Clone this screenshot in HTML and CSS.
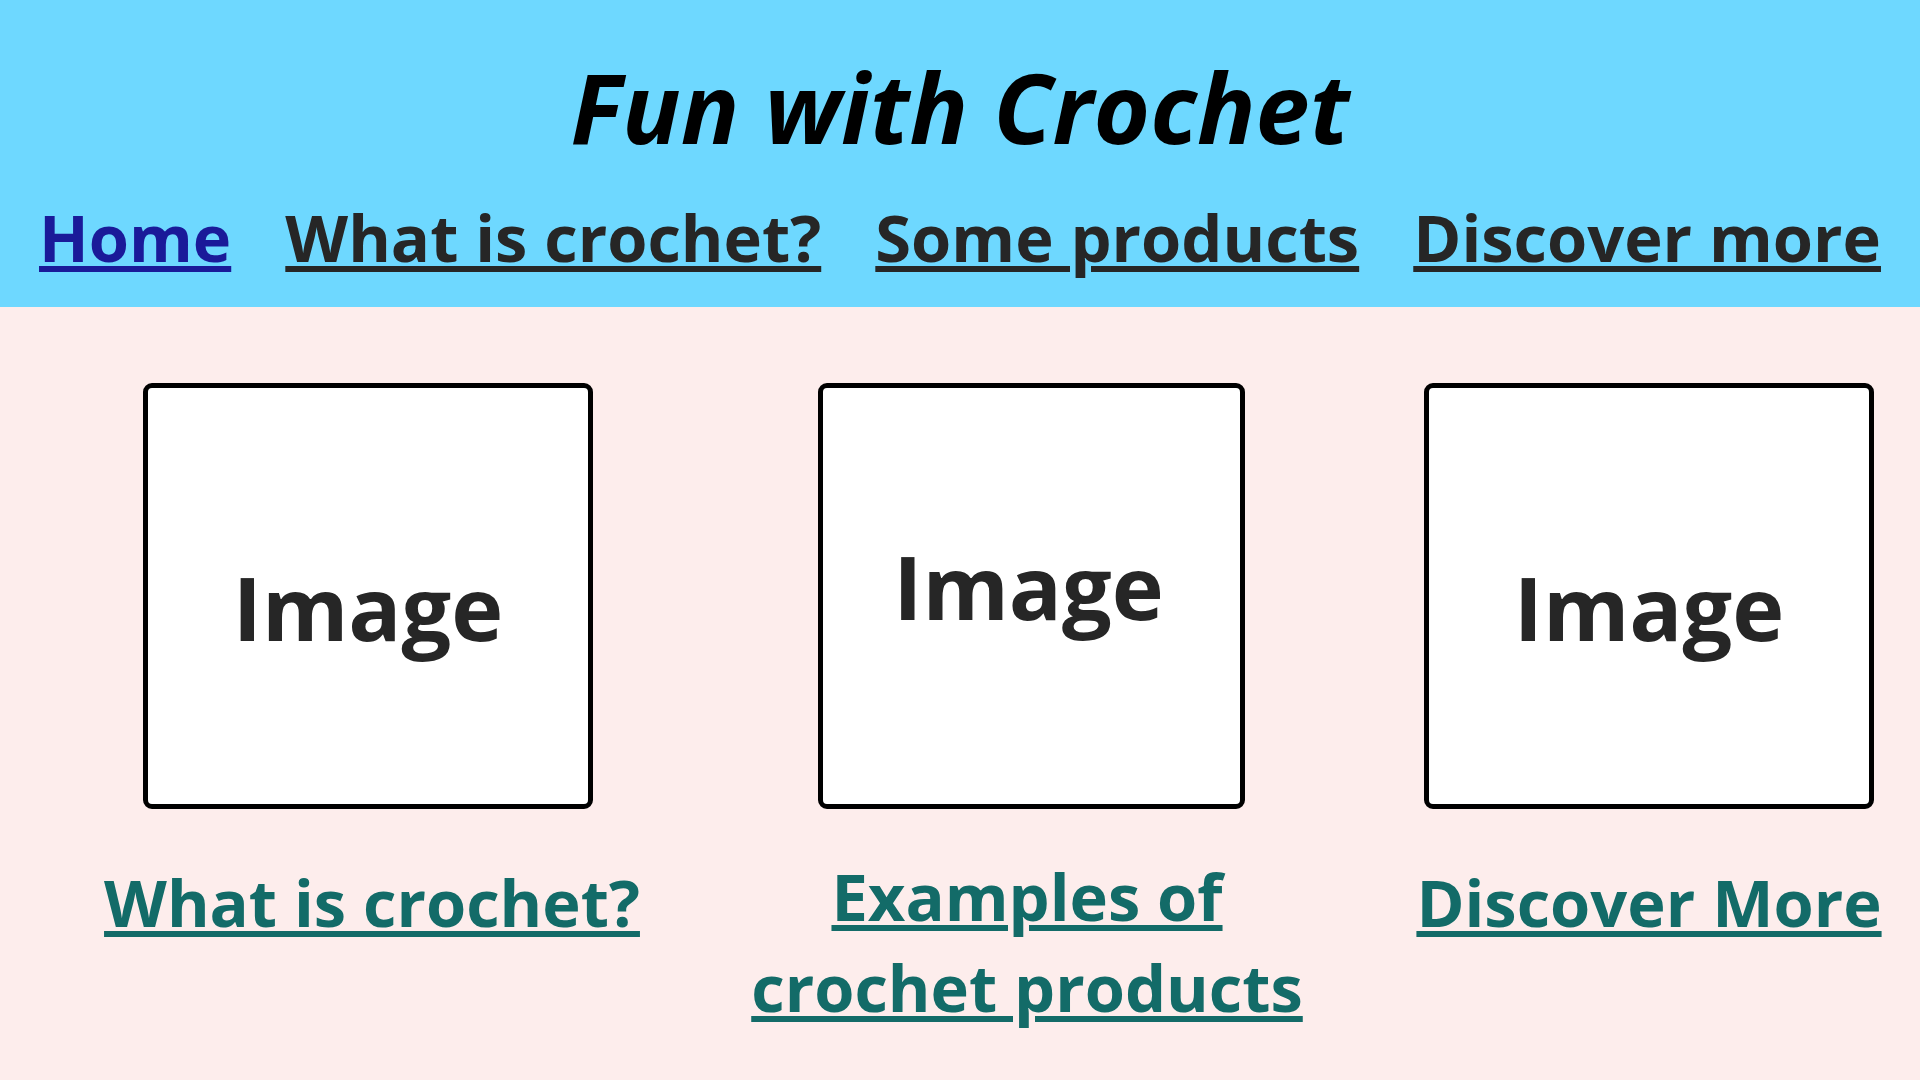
FILE: index.html
```html
<!DOCTYPE html>
<html lang="en">
<head>
<meta charset="utf-8">
<meta name="viewport" content="width=device-width, initial-scale=1">
<title>Fun with Crochet</title>
<link rel="stylesheet" href="styles.css">
</head>
<body>
<header class="site-header">
  <h1 class="site-title">Fun with Crochet</h1>
  <nav class="site-nav">
    <a class="nav-link nav-link-current" href="#home" aria-current="page">Home</a>
    <a class="nav-link" href="#what">What is crochet?</a>
    <a class="nav-link" href="#products">Some products</a>
    <a class="nav-link" href="#discover">Discover more</a>
  </nav>
</header>
<main class="cards">
  <section class="card card-what">
    <div class="picture">Image</div>
    <a class="caption" href="#what">What is crochet?</a>
  </section>
  <section class="card card-products">
    <div class="picture">Image</div>
    <a class="caption" href="#products">Examples of<br>crochet products</a>
  </section>
  <section class="card card-discover">
    <div class="picture">Image</div>
    <a class="caption" href="#discover">Discover More</a>
  </section>
</main>
</body>
</html>
```
FILE: styles.css
```css
* { box-sizing: border-box; }

body {
  margin: 0;
  min-height: 100vh;
  background: #fdedec;
  color: #262626;
  font-family: "Open Sans", "Noto Sans", sans-serif;
  font-weight: 700;
}

.site-header {
  padding: 42px 39px 24px;
  background: #6ed8ff;
}

.site-title {
  margin: 0;
  color: #000;
  font-size: 97px;
  font-style: italic;
  line-height: 128px;
  text-align: center;
}

.site-nav {
  display: flex;
  justify-content: space-between;
  margin-top: 22px;
}

.nav-link,
.caption {
  font-size: 65px;
  line-height: 91px;
  white-space: nowrap;
  text-decoration: underline;
  text-decoration-thickness: 6px;
  text-underline-offset: 4px;
}

.nav-link { color: #262626; }
.nav-link-current { color: #1a1a99; }

.cards {
  display: grid;
  grid-template-columns: 530fr 552fr 464fr;
  gap: 114px;
  padding: 76px 39px 40px 107px;
}

.card {
  display: flex;
  flex-direction: column;
  min-width: 0;
}

.picture {
  display: flex;
  align-items: center;
  justify-content: center;
  height: 426px;
  padding-top: 22px;
  border: 5px solid #000;
  border-radius: 9px;
  background: #fff;
  font-size: 88px;
  line-height: 126px;
}

.caption {
  align-self: center;
  margin-top: 48px;
  color: #136b68;
  text-align: center;
}

.card-what .picture { margin: 0 44px 0 36px; }
.card-discover .picture { margin: 0 7px; }

.card-products .picture {
  margin: 0 58px 0 67px;
  padding: 0 6px 20px 0;
}
.card-products .caption { margin-top: 42px; }
```
